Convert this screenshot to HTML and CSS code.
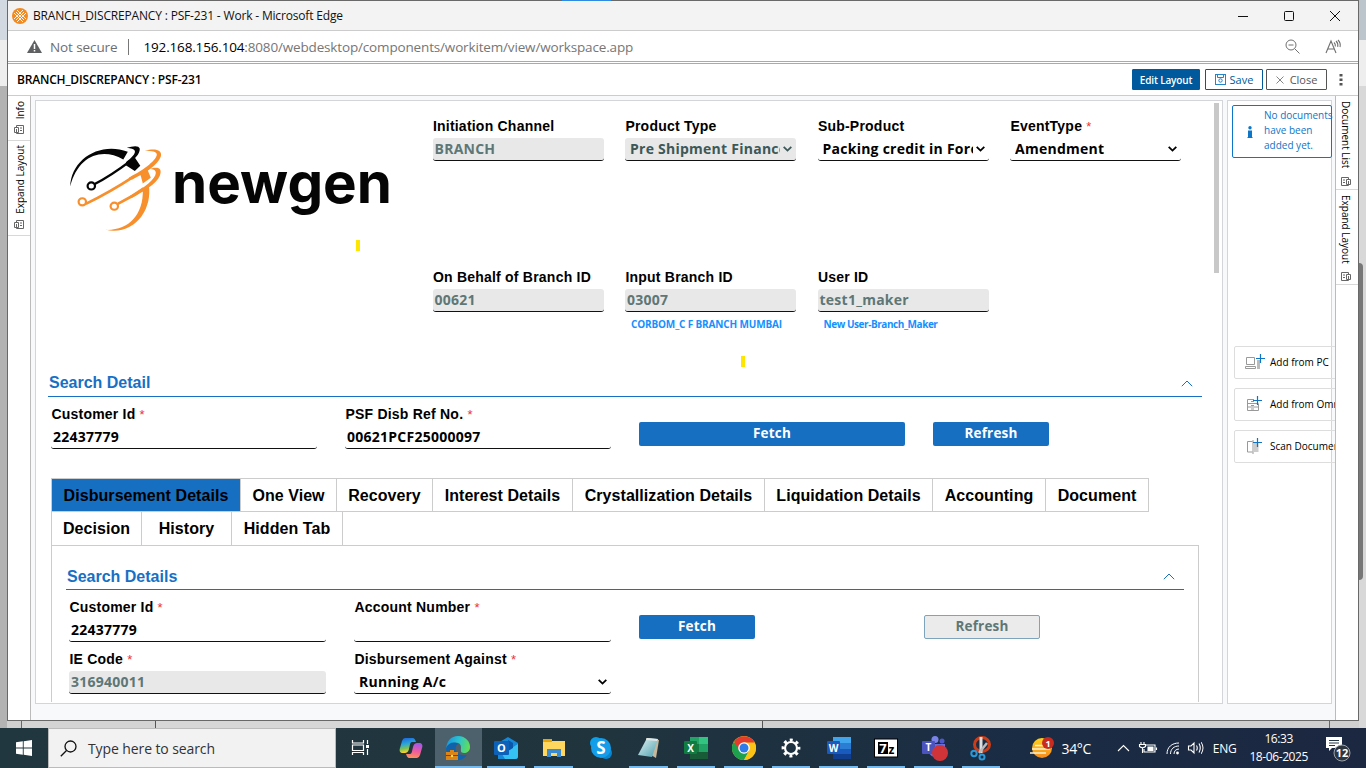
FILE: index.html
```html
<!DOCTYPE html>
<html lang="en">
<head>
<meta charset="utf-8">
<title>BRANCH_DISCREPANCY : PSF-231 - Work</title>
<link rel="stylesheet" href="styles.css">
</head>
<body>
<svg width="0" height="0" class="defs">
  <defs>
    <g id="rail-icon" fill="none" stroke="#666"><path d="M3.500 3V1.500H10.500V9.500H3.500V7M1.500 3.500H5.500V8.500H1.500zM7 4H9M7 6.500H9M3.500 5V7"/></g>
    <g id="plus"><path d="M4.500 0V9M0 4.500H9" stroke="#0f73c6" stroke-width="1.200"/></g>
    <linearGradient id="cop1" x1="0" y1="0" x2=".2" y2="1"><stop offset="0" stop-color="#1b62e0"/><stop offset=".45" stop-color="#29a7d8"/><stop offset=".75" stop-color="#7fc252"/><stop offset="1" stop-color="#ffd42a"/></linearGradient>
    <linearGradient id="cop2" x1=".5" y1="0" x2=".3" y2="1"><stop offset="0" stop-color="#a358e8"/><stop offset=".5" stop-color="#ef5aa0"/><stop offset="1" stop-color="#ff9355"/></linearGradient>
    <linearGradient id="edge1" x1="0" y1=".3" x2="1" y2=".5"><stop offset="0" stop-color="#1595e0"/><stop offset=".5" stop-color="#2bc3d2"/><stop offset="1" stop-color="#62de55"/></linearGradient>
    <linearGradient id="note" x1="0" y1="0" x2="1" y2="1"><stop offset="0" stop-color="#e3f3f4"/><stop offset="1" stop-color="#4ca0ad"/></linearGradient>
    <linearGradient id="sun" x1="0" y1="0" x2="0" y2="1"><stop offset="0" stop-color="#ffd21c"/><stop offset="1" stop-color="#f58a1f"/></linearGradient>
  </defs>
</svg>
<div class="desktop">
  <div class="stage">
    <div class="backdrop"><i class="b-left"></i><i class="b-right"></i><i class="b-thumb"></i><i class="b-foot"></i></div>
    <div class="window">
      <div class="titlebar">
        <svg class="favicon" width="16" height="16" viewBox="0 0 16 16"><circle cx="8" cy="8" r="8" fill="#f18a21"/><path d="M2 5L11 14M5 2L14 11M2 11L11 2M5 14L14 5M4 4L12 12M12 4L4 12" stroke="#fff" stroke-width=".9"/></svg>
        <span class="title-text">BRANCH_DISCREPANCY : PSF-231 - Work - Microsoft Edge</span>
        <svg class="winctl" width="110" height="12" viewBox="0 0 110 12" fill="none" stroke="#111"><path d="M2 6.500H12"/><rect x="48.500" y="1.500" width="9" height="9" rx="1"/><path d="M94 1L104 11M104 1L94 11"/></svg>
        <i class="accent"></i>
      </div>
      <div class="address">
        <svg width="15" height="13" viewBox="0 0 15 13"><path d="M7.500 0L15 13H0z" fill="#5e6062"/><path d="M7.500 4V9M7.500 10V11.500" stroke="#fff" stroke-width="1.500"/></svg>
        <span class="notsecure">Not secure</span><i class="bar"></i>
        <span class="url"><b>192.168.156.104</b>:8080/webdesktop/components/workitem/view/workspace.app</span>
        <svg class="lens" width="16" height="16" viewBox="0 0 16 16" fill="none" stroke="#707070"><circle cx="6" cy="6" r="5"/><path d="M3.500 6H8.500M9.800 9.800L14.500 14.500"/></svg>
        <svg class="aloud" width="17" height="16" viewBox="0 0 17 16" fill="none" stroke="#707070" stroke-width="1.100"><path d="M1 14L6 2L11 14M2.800 10H9.200M9 3.500C10.200 4.500 10.600 5.800 10.300 7.500M11 2C12.600 3.500 13.200 5.400 12.700 7.800M13 1C15 3 15.700 5.400 15 8"/></svg>
      </div>
      <div class="apphead">
        <span class="appname">BRANCH_DISCREPANCY : PSF-231</span>
        <button class="btn-head solid">Edit Layout</button>
        <button class="btn-head blue"><svg width="11" height="11" viewBox="0 0 11 11" fill="none" stroke="#2683c8"><rect x=".5" y=".5" width="10" height="10"/><path d="M2.500 .5V3.500H8.500V.5"/><circle cx="5.500" cy="6.500" r="1.700"/></svg>Save</button>
        <button class="btn-head gray"><svg width="8" height="8" viewBox="0 0 8 8" stroke="#777" fill="none" stroke-width=".9"><path d="M.5 .5L7.500 7.500M7.500 .5L.5 7.500"/></svg>Close</button>
        <svg class="dots" width="4" height="12" viewBox="0 0 4 12" fill="#555"><rect x=".5" y="0" width="3" height="2.500"/><rect x=".5" y="4.500" width="3" height="2.500"/><rect x=".5" y="9" width="3" height="2.500"/></svg>
      </div>
      <div class="body">
        <div class="rail left">
          <div class="rail-item info"><span>Info</span><svg width="12" height="11"><use href="#rail-icon"/></svg></div>
          <div class="rail-item expand"><span>Expand Layout</span><svg width="12" height="11"><use href="#rail-icon"/></svg></div>
        </div>
        <div class="panels">
          <main class="form">
            <div class="form-body">
              <div class="top">
                <div class="brand">
                  <svg width="324" height="96" viewBox="0 0 324 96">
                    <g transform="translate(.8 0) scale(1 .965)">
                    <g fill="#050505"><path d="M1.500 45C2 17 31-2 59 9L54.500 17C32 4 9 14 1.500 45z"/><path d="M58 5C64 3 70 2 71 6C71 12 66 16 59 23L57 20C63 15 67 11 66 8C65 6 62 6 58 5zM60 21L66 15L71.500 23.500L66 29L57 23z"/></g>
                    <path d="M25 43Q42 34 61 19" fill="none" stroke="#050505" stroke-width="2.500"/><circle cx="22.500" cy="44.500" r="3.700" fill="#fff" stroke="#050505" stroke-width="2.200"/>
                    <g fill="#f78f2d"><path d="M76 8C86 5 94 7 92 14C89 23 77 31 63 38L60 36C77 27 88 17 88 12C88 9 83 8 76 8zM71 30L78 26L82 36L74 42z"/><path d="M81 27C89 24 94 26 91 34C88 42 74 51 63 57L61 55C76 46 87 37 87 31C87 28 84 27 81 27zM74 48L80 43C84 70 65 96 37 90C59 91 75 75 74 48z"/></g>
                    <path d="M17 63Q41 51 66 34M49 63Q63 56 75 47" fill="none" stroke="#f78f2d" stroke-width="2.700"/>
                    <g fill="#fff" stroke="#f78f2d" stroke-width="2.200"><circle cx="13.500" cy="61" r="3.700"/><circle cx="45.500" cy="65.500" r="3.700"/></g>
                    </g>
                    <text x="104" y="60" class="wordmark" textLength="220" lengthAdjust="spacingAndGlyphs">newgen</text>
                  </svg>
                  <i class="mark"></i>
                </div>
                <div class="top-fields">
                  <div class="field"><label>Initiation Channel</label><div class="inp off">BRANCH</div></div>
                  <div class="field"><label>Product Type</label><div class="inp sel off dark"><span>Pre Shipment Finance</span><svg width="9" height="6" viewBox="0 0 9 6"><path d="M.7 .8L4.500 4.600L8.300 .8" fill="none" stroke="currentColor" stroke-width="1.800"/></svg></div></div>
                  <div class="field"><label>Sub-Product</label><div class="inp sel tight"><span>Packing credit in Foreign</span><svg width="9" height="6" viewBox="0 0 9 6"><path d="M.7 .8L4.500 4.600L8.300 .8" fill="none" stroke="currentColor" stroke-width="1.800"/></svg></div></div>
                  <div class="field"><label>EventType <em>*</em></label><div class="inp sel"><span>Amendment</span><svg width="9" height="6" viewBox="0 0 9 6"><path d="M.7 .8L4.500 4.600L8.300 .8" fill="none" stroke="currentColor" stroke-width="1.800"/></svg></div></div>
                  <div class="field"><label>On Behalf of Branch ID</label><div class="inp off">00621</div></div>
                  <div class="field"><label>Input Branch ID</label><div class="inp off">03007</div><div class="hint">CORBOM_C F BRANCH MUMBAI</div><i class="mark second"></i></div>
                  <div class="field"><label>User ID</label><div class="inp off">test1_maker</div><div class="hint narrow">New User-Branch_Maker</div></div>
                </div>
              </div>
              <div class="section-head"><h2>Search Detail</h2><svg width="12" height="7" viewBox="0 0 12 7"><path d="M.8 6.200L6 1L11.200 6.200" fill="none" stroke="#1770c4"/></svg></div>
              <div class="search-row">
                <div class="field"><label>Customer Id <em>*</em></label><div class="inp">22437779</div></div>
                <div class="field"><label>PSF Disb Ref No. <em>*</em></label><div class="inp">00621PCF25000097</div></div>
                <button class="act">Fetch</button>
                <button class="act short">Refresh</button>
              </div>
              <div class="tabs">
                <div class="tabrow"><div class="tab on w190">Disbursement Details</div><div class="tab w96">One View</div><div class="tab w96">Recovery</div><div class="tab w140">Interest Details</div><div class="tab w192">Crystallization Details</div><div class="tab w168">Liquidation Details</div><div class="tab w113">Accounting</div><div class="tab w102">Document</div></div>
                <div class="tabrow"><div class="tab w91">Decision</div><div class="tab w90">History</div><div class="tab w110">Hidden Tab</div></div>
              </div>
              <div class="tabpanel">
                <div class="section-head inner"><h2>Search Details</h2><svg width="12" height="7" viewBox="0 0 12 7"><path d="M.8 6.200L6 1L11.200 6.200" fill="none" stroke="#1770c4"/></svg></div>
                <div class="detail-grid">
                  <div class="field"><label>Customer Id <em>*</em></label><div class="inp">22437779</div></div>
                  <div class="field"><label>Account Number <em>*</em></label><div class="inp"></div></div>
                  <button class="act short">Fetch</button>
                  <button class="act short disabled">Refresh</button>
                  <div class="field"><label>IE Code <em>*</em></label><div class="inp off">316940011</div></div>
                  <div class="field"><label>Disbursement Against <em>*</em></label><div class="inp sel"><span>Running A/c</span><svg width="9" height="6" viewBox="0 0 9 6"><path d="M.7 .8L4.500 4.600L8.300 .8" fill="none" stroke="currentColor" stroke-width="1.800"/></svg></div></div>
                </div>
              </div>
            </div>
            <i class="scroll"></i>
          </main>
          <aside class="docs">
            <div class="notice"><svg width="6" height="12" viewBox="0 0 6 12" fill="#0e76c8"><circle cx="3" cy="1.700" r="1.700"/><path d="M1 4.500H5V11H5.500V12H.5V11H1z"/></svg><p>No documents<br>have been<br>added yet.</p></div>
            <div class="adders">
              <div class="add"><svg width="20" height="16" viewBox="0 0 20 16" fill="none" stroke="#999"><path d="M1.500 3.500H9.500V10.500H1.500zM.5 12.500H10.500V14.500H.5z"/><path d="M12 6H15V15H12z" fill="#bbb" stroke="none"/><use href="#plus" x="11"/></svg><span>Add from PC</span></div>
              <div class="add"><svg width="20" height="16" viewBox="0 0 20 16" fill="none" stroke="#999"><path d="M9 3.500H2.500V14.500H13.500V8M2.500 7.500H13.500M2.500 11H13.500M6 5.500H9M6 9.500H9M6 13H9"/><use href="#plus" x="8"/></svg><span>Add from OmniDocs</span></div>
              <div class="add"><svg width="20" height="16" viewBox="0 0 20 16" fill="none" stroke="#999"><path d="M7.500 3.500H2.500V14H7.500"/><path d="M9 5H13.500V14H9z" fill="#ccc" stroke="none"/><path d="M8 2V16"/><use href="#plus" x="8"/></svg><span>Scan Document</span></div>
            </div>
          </aside>
        </div>
        <div class="rail right">
          <div class="rail-item doclist"><span>Document List</span><svg width="12" height="11"><use href="#rail-icon"/></svg></div>
          <div class="rail-item expand"><span>Expand Layout</span><svg width="12" height="11"><use href="#rail-icon"/></svg></div>
        </div>
      </div>
    </div>
  </div>
  <div class="taskbar">
    <div class="start"><svg width="16" height="16" viewBox="0 0 16 16" fill="#fff"><path d="M0 2.300L6.800 1.300V7.500H0zM7.700 1.200L16 0V7.500H7.700zM0 8.400H6.800V14.700L0 13.700zM7.700 8.400H16V16L7.700 14.800z"/></svg></div>
    <div class="search"><svg width="17" height="17" viewBox="0 0 17 17" fill="none" stroke="#111" stroke-width="1.300"><circle cx="10.500" cy="6.500" r="5.500"/><path d="M6.500 10.500L.8 16.200"/></svg><span>Type here to search</span></div>
    <div class="apps">
      <div class="app first"><svg width="24" height="24" viewBox="0 0 24 24" fill="none" stroke="#fff" stroke-width="1.200"><path d="M4.500 4V7H15.500V4M4.500 19V16.500H15.500V19M4.500 9H15.500V14.500H4.500zM19.500 4V8M19.500 13V19"/><path d="M18 9H21V12H18z" fill="#fff" stroke="none"/></svg></div>
      <div class="app"><svg width="24" height="24" viewBox="0 0 24 24"><path d="M6 2H13C16 2 16 4 17 6H13C11 6 11 9 10 13C9 17 7 17 4 17C1 17 0 15 1 12L3 5Q4 2 6 2z" fill="url(#cop1)"/><path d="M18 22H11C8 22 8 20 7 18H11C13 18 13 15 14 11C15 7 17 7 20 7C23 7 24 9 23 12L21 19Q20 22 18 22z" fill="url(#cop2)"/></svg></div>
      <div class="app active run"><svg width="26" height="26" viewBox="0 0 26 26"><path d="M1 16C1 6 6 1 13 1C21 1 25 7 25 12C25 16 22 18 19 18C15 18 16 15 16 12C16 8 12 7 9 8C5 9 2 12 1 16z" fill="url(#edge1)"/><path d="M1 13C3 8 9 6 13 9C8 12 11 22 22 20C19 24 15 26 11 25C5 24 1 19 1 13z" fill="#1262ab"/><path d="M1 17H13V25H1zM5 15H9V17H5z" fill="#dc8415"/><path d="M1 20H13V21H1z" fill="#7b420e"/><circle cx="7" cy="21" r="1.200" fill="#ffdc5b"/></svg></div>
      <div class="app run"><svg width="26" height="24" viewBox="0 0 26 24"><path d="M5 7L15 1L25 7V21Q25 23 22 23H5z" fill="#1688d5"/><path d="M25 8L9 18L12 23H22Q25 23 25 20z" fill="#35c1f1"/><path d="M15 4L20 7V12L15 15z" fill="#0b57aa"/><rect x="1" y="5" width="15" height="14" rx="1" fill="#0d61b9"/><text x="8.500" y="16" class="glyph g11">O</text></svg></div>
      <div class="app run"><svg width="24" height="24" viewBox="0 0 24 24"><path d="M1 5H23V20H1z" fill="#ffd75e"/><path d="M1 3H10V6H1z" fill="#e5a50b"/><path d="M5 21V13H19V21H15V17H9V21z" fill="#3b8bd0"/></svg></div>
      <div class="app"><svg width="24" height="24" viewBox="0 0 24 24"><circle cx="7" cy="7" r="6" fill="#0ba0e8"/><circle cx="17" cy="17" r="6" fill="#0785d0"/><circle cx="12" cy="12" r="10" fill="#159dea"/><text x="12" y="18" class="glyph g16">S</text></svg></div>
      <div class="app run"><svg width="24" height="24" viewBox="0 0 24 24"><path d="M9 2L22 4L19 22L14 19z" fill="#c7b79b"/><path d="M10 2L21 3L15 21L1 19z" fill="url(#note)"/><path d="M10 2L21 3L20 5L9 4z" fill="#e4e6e6"/></svg></div>
      <div class="app run"><svg width="26" height="24" viewBox="0 0 26 24"><path d="M7 1H25V23H7z" fill="#177944"/><path d="M7 1H16V8H7z" fill="#23a366"/><path d="M16 1H25V8H16z" fill="#33c481"/><path d="M16 8H25V16H16z" fill="#21a366"/><path d="M7 16H25V23H7z" fill="#185c37"/><rect x="1" y="5" width="13" height="13" rx="1" fill="#107c41"/><text x="7.500" y="15.500" class="glyph g10">X</text></svg></div>
      <div class="app run"><svg width="24" height="24" viewBox="0 0 24 24"><circle cx="12" cy="12" r="12" fill="#fbc316"/><path d="M12 12L1.600 6A12 12 0 0 0 12 24L17 15z" fill="#1da14e"/><path d="M12 6.500H22.700A12 12 0 0 1 12 24L17 15z" fill="#fbc316"/><path d="M12 6.500H22.600A12 12 0 0 0 2 5.500L7 14z" fill="#e33b2e"/><circle cx="12" cy="12" r="5.800" fill="#fff"/><circle cx="12" cy="12" r="4.500" fill="#2d7bea"/></svg></div>
      <div class="app run"><svg width="20" height="20" viewBox="0 0 20 20" fill="none" stroke="#fff"><circle cx="10" cy="10" r="6" stroke-width="2.200"/><circle cx="10" cy="10" r="8" stroke-width="2.800" stroke-dasharray="3 3.283" stroke-dashoffset="1.500"/></svg></div>
      <div class="app run"><svg width="26" height="24" viewBox="0 0 26 24"><path d="M7 1H25V8H7z" fill="#41a5ee"/><path d="M7 7H25V13H7z" fill="#2b7cd3"/><path d="M7 13H25V18H7z" fill="#185abd"/><path d="M7 18H25V23H7z" fill="#103f91"/><rect x="1" y="5" width="13" height="13" rx="1" fill="#185abd"/><text x="7.500" y="15.500" class="glyph g10">W</text></svg></div>
      <div class="app run"><svg width="24" height="20" viewBox="0 0 24 20"><rect x=".5" y="1" width="23" height="18" fill="#fff" stroke="#000"/><rect x="4" y="4" width="10" height="12" fill="#000"/><text x="9" y="15" class="glyph g13">7</text><text x="17.500" y="16" class="glyph g12 black">z</text></svg></div>
      <div class="app run"><svg width="28" height="26" viewBox="0 0 28 26"><circle cx="15" cy="4.500" r="3.500" fill="#7b83eb"/><circle cx="22" cy="6" r="2.500" fill="#5059c9"/><path d="M8 9H25V16Q22 22 14 22Q8 20 8 13z" fill="#6870d8"/><rect x="2" y="6" width="13" height="13" rx="1" fill="#4b53bc"/><text x="8.500" y="16" class="glyph g10">T</text><circle cx="20" cy="18" r="8" fill="#d13438"/></svg></div>
      <div class="app run"><svg width="24" height="26" viewBox="0 0 24 26"><ellipse cx="13" cy="9.500" rx="7.500" ry="7" fill="none" stroke="#cc3d17" stroke-width="3"/><path d="M10.500 2H13.500V18H10.500z" fill="#ddd"/><path d="M18 8L10 18" stroke="#bbb" stroke-width="2.500"/><circle cx="5" cy="18.500" r="2.700" fill="none" stroke="#2a99d8" stroke-width="2"/><circle cx="13" cy="22" r="2.500" fill="none" stroke="#2a99d8" stroke-width="2"/></svg></div>
    </div>
    <div class="tray">
      <svg class="weather" width="26" height="24" viewBox="0 0 26 24"><circle cx="12" cy="12" r="10" fill="url(#sun)"/><path d="M5 9.500H18M2 13H20M0 17H16" stroke="#fff2d0" stroke-width="1.600"/><circle cx="18" cy="7" r="6" fill="#c92b21"/><text x="18" y="10.500" class="glyph g9">1</text></svg>
      <span class="temp">34°C</span>
      <svg class="t-icons" width="84" height="18" viewBox="0 0 84 18" fill="none" stroke="#fff" stroke-width="1.100"><path d="M1 12L6.500 6.500L12 12"/><path d="M28 6H38V13H27V10M39.500 8.500V11M24 3V5M27 3V5M22.500 5.500H28.500V7.500Q25.500 10 22.500 7.500zM25.500 9V14"/><path d="M31 8H36V11.500H31z" fill="#fff"/><path d="M50 15C50 8 55 4 62 4M53.500 15C53.500 10 57 7 62 7M57 15C57 12 59 10 62 10" stroke-width="1"/><circle cx="60.500" cy="14" r="1.400" fill="#fff" stroke="none"/><path d="M71.500 7H74L77 4V14L74 11H71.500zM79.500 6.500Q81 9 79.500 11.500M82 4.500Q84.500 9 82 13.500"/></svg>
      <svg class="wave" width="4" height="16" viewBox="0 0 4 16" fill="none" stroke="#fff"><path d="M0 2Q4 8 0 14"/></svg>
      <span class="lang">ENG</span>
      <div class="clock"><span>16:33</span><span>18-06-2025</span></div>
      <svg class="notif" width="26" height="26" viewBox="0 0 26 26"><path d="M1 1H17V12H7L4 15V12H1z" fill="#fff"/><path d="M4 4.500H14M4 7H14M4 9.500H10" stroke="#273647" stroke-width="1"/><circle cx="17" cy="17" r="8" fill="#30363d" stroke="#9aa4ae"/><text x="17" y="21" class="glyph g11">12</text></svg>
    </div>
  </div>
</div>
</body>
</html>
```
FILE: styles.css
```css
* { box-sizing: border-box; }
body { margin: 0; width: 1366px; height: 768px; overflow: hidden; font-family: "Open Sans", "Noto Sans", sans-serif; color: #000; }
svg { display: block; flex: none; }
button { font-family: inherit; padding: 0; margin: 0; }
i { display: block; }
.defs { position: absolute; }
.desktop { display: flex; flex-direction: column; height: 768px; }
.stage { position: relative; height: 728px; padding-left: 7px; background: #d0d0d0; }

/* the window that lies behind */
.b-left, .b-right, .b-thumb, .b-foot { position: absolute; }
.b-left { left: 0; top: 0; width: 7px; height: 728px; background: linear-gradient(#d3d9e0 0 40px, #eee 40px 86px, #b3b3b3 86px); }
.b-right { left: 1359px; top: 0; width: 7px; height: 728px; background: linear-gradient(#bcc4cc 0 40px, #eee 40px 86px, #d8d8d8 86px); }
.b-thumb { left: 1359px; top: 263px; width: 4px; height: 317px; background: #777; border-radius: 0 4px 4px 0; }
.b-foot { left: 21px; top: 720px; width: 1309px; height: 8px; background: linear-gradient(90deg, #d4d4d4 0 133px, #555 133px 134px, #d7d7d7 134px 740px, #555 740px 741px, #d0d0d0 741px); border: solid #667; border-width: 0 1px; }

.window { position: relative; width: 1352px; height: 721px; border: 1px solid #696969; background: #fff; display: flex; flex-direction: column; }
.titlebar { position: relative; height: 30px; background: #f3f3f3; border-bottom: 1px solid #ccc; display: flex; align-items: center; padding-left: 4px; }
.title-text { margin-left: 5px; font-size: 12px; letter-spacing: -.17px; white-space: nowrap; color: #111; }
.winctl { margin-left: auto; margin-right: 12px; }
.accent { position: absolute; left: 554px; top: -1px; width: 49px; height: 1px; background: #2d8ae0; }
.address { height: 31px; border-bottom: 1px solid #aaa; display: flex; align-items: center; padding: 1px 0 0 19px; }
.notsecure { margin-left: 8px; font-size: 13.500px; letter-spacing: -.1px; color: #6e6e6e; white-space: nowrap; }
.bar { width: 1px; height: 16px; background: #777; margin: 0 14px 0 11px; }
.url { font-size: 13.500px; letter-spacing: -.16px; color: #767676; white-space: nowrap; }
.url b { font-weight: 400; color: #000; }
.lens { margin-left: auto; }
.aloud { margin: 0 16px 0 24px; }
.apphead { height: 33px; margin-top: 1px; border-top: 1px solid #aaa; border-bottom: 1px solid #ccc; display: flex; align-items: center; padding-left: 9px; }
.appname { font-size: 12px; font-weight: 600; letter-spacing: -.18px; margin-right: auto; white-space: nowrap; }
.btn-head { height: 21px; display: flex; align-items: center; justify-content: center; border: 1px solid #005a9c; background: #fff; font-size: 11px; color: #005a9c; border-radius: 1px; }
.btn-head.solid { width: 68px; background: #00599c; color: #fff; font-weight: 600; font-size: 10px; letter-spacing: -.15px; }
.btn-head.blue { width: 58px; margin-left: 5px; gap: 4px; }
.btn-head.gray { width: 61px; margin-left: 3px; gap: 6px; border-color: #555; color: #555; }
.dots { margin: 0 15px 0 12px; }
.body { flex: 1; display: flex; min-height: 0; }

.rail { width: 23px; background: #fff; flex: none; }
.rail.left { border-right: 1px solid #bbb; }
.rail.right { border-left: 1px solid #bbb; position: relative; }
.rail-item { display: flex; flex-direction: column; align-items: center; justify-content: space-between; border-bottom: 1px solid #d8d8d8; font-size: 10px; padding: 5px 0 5px; }
.rail-item span { writing-mode: vertical-rl; line-height: 14px; white-space: nowrap; }
.left .rail-item span { transform: rotate(180deg); margin-left: 2px; }
.rail-item.info { height: 45px; }
.rail-item.expand { height: 95px; }
.left .expand { padding-top: 4px; }
.rail-item.doclist { height: 94px; padding-bottom: 2px; }
.right .rail-item span { margin-right: 3px; }
.right .expand { padding-bottom: 2px; }
.right .rail-item svg { transform: translateX(-1px) scaleX(-1); }

.panels { flex: 1; min-width: 0; display: flex; gap: 4px; background: #f8f9fb; padding: 4px 4px 16px 4px; }
.form { position: relative; width: 1188px; flex: none; border: 1px solid #d3d5d8; background: #fff; overflow: hidden; }
.form-body { height: 601px; overflow: hidden; padding-left: 12px; }
.scroll { position: absolute; right: 3px; top: 2px; width: 5px; height: 170px; background: #c8c8c8; }
.top { display: flex; height: 268px; }
.brand { width: 384.500px; padding: 42px 0 0 20px; }
.wordmark { font-family: Inter, sans-serif; font-weight: 700; font-size: 56px; fill: #050505; }
.mark { width: 4px; height: 11px; background: #ffe600; }
.brand .mark { margin: 1px 0 0 288px; }
.mark.second { margin: 25px 0 0 116px; }
.top-fields { display: grid; grid-template-columns: repeat(4, 171px); column-gap: 21.500px; grid-template-rows: 151px 117px; padding-top: 17px; }
.field { min-width: 0; }
label { display: block; font: bold 14px/17px "Liberation Sans", Arial, sans-serif; letter-spacing: .22px; padding-left: .4px; white-space: nowrap; }
label em { font-style: normal; font-weight: 400; font-size: 13px; color: #e33; }
.inp { height: 23px; margin-top: 3px; border-bottom: 1px solid #111; border-radius: 3px; padding-left: 2px; font-size: 14px; font-weight: 700; line-height: 22px; letter-spacing: .25px; white-space: nowrap; }
.inp.off { background: #e8e8e8; color: #5e7776; }
.inp.off.dark { color: #3c5857; }
.sel { display: flex; align-items: center; padding: 0 4px 0 5px; gap: 3px; }
.sel span { flex: 1; overflow: hidden; }
.hint { font-size: 10px; line-height: 14px; font-weight: 700; color: #1490ff; padding: 5px 0 0 6px; white-space: nowrap; letter-spacing: -.15px; }
.hint.narrow { letter-spacing: -.44px; }
.section-head { height: 28px; width: 1154px; border-bottom: 1px solid #1770c4; display: flex; align-items: center; justify-content: space-between; padding: 1px 9px 0 1px; }
h2 { margin: 0; font: bold 16px/18px "Liberation Sans", Arial, sans-serif; color: #1770c4; }
.search-row { display: grid; grid-template-columns: repeat(4, 266px); column-gap: 28px; padding: 9px 0 0 3px; height: 81px; }
.act { height: 24px; margin-top: 16px; background: #176fc1; color: #fff; border: 0; border-radius: 2px; font-weight: 700; font-size: 13.500px; letter-spacing: .2px; line-height: 22px; padding-bottom: 2px; }
.act.short { width: 116px; }
.act.disabled { background: #ebebeb; color: #5e7776; border: 1px solid #7da3bd; line-height: 20px; }
.tabs { margin-left: 3px; width: 1148px; }
.tabrow { display: flex; height: 34px; }
.tabrow + .tabrow { margin-top: -1px; height: 35px; }
.tab { border: 1px solid #ccc; border-left-width: 0; display: flex; align-items: center; justify-content: center; font: bold 16px/18px "Liberation Sans", Arial, sans-serif; letter-spacing: .06px; white-space: nowrap; padding-top: 1px; }
.tab:first-child { border-left-width: 1px; }
.tab.on { background: #176fc1; }
.w190 { width: 190px; } .w96 { width: 96px; } .w140 { width: 140px; } .w192 { width: 192px; } .w168 { width: 168px; } .w113 { width: 113px; } .w102 { width: 103px; } .w91 { width: 91px; } .w90 { width: 90px; } .w110 { width: 111px; }
.tabpanel { margin: -1px 0 0 3px; width: 1148px; height: 200px; border: 1px solid #ccc; padding: 16px 14px 0; }
.section-head.inner { width: 1118px; padding-top: 2px; }
.detail-grid { display: grid; grid-template-columns: repeat(4, 257px); column-gap: 28px; grid-template-rows: 52px 52px; padding: 9px 0 0 3px; }

.docs { position: relative; width: 105px; flex: none; border: 1px solid #d3d5d8; background: #fff; padding: 4px 0 0 4px; }
.notice { width: 100px; height: 53px; border: 1px solid #0e76c8; border-radius: 2px; color: #0e76c8; display: flex; align-items: center; padding-left: 14px; gap: 11px; font-size: 10px; line-height: 15px; }
.notice p { margin: -2px 0 0; white-space: nowrap; }
.adders { margin: 188px 0 0 2px; display: grid; gap: 9px; width: 101px; overflow: hidden; }
.add { height: 33px; width: 160px; border: 1px solid #ddd; border-radius: 2px; display: flex; align-items: center; gap: 5px; padding: 0 0 1px 10px; font-size: 10px; white-space: nowrap; }

.taskbar { height: 40px; display: flex; background: linear-gradient(90deg, #21373f 0, #20343e 45%, #1a2c44 75%, #1c2740); color: #fff; }
.start { width: 48px; display: grid; place-items: center; }
.search { width: 288px; background: #f2f2f2; border: 1px solid #bbb; display: flex; align-items: center; padding-left: 11px; gap: 11px; font-size: 14px; letter-spacing: -.1px; color: #333; }
.apps { display: flex; }
.app { width: 47.500px; height: 40px; position: relative; display: grid; place-items: center; }
.app.first { width: 51px; padding-right: 3px; }
.app.active { background: #4c616b; width: 47px; margin-right: 1px; }
.app.run::after { content: ""; position: absolute; left: 4px; right: 5px; bottom: 0; height: 2px; background: #76b9ed; }
.app.active::after { left: 0; right: 0; }
.glyph { font-family: "Open Sans", sans-serif; font-weight: 700; fill: #fff; text-anchor: middle; }
.g9 { font-size: 9px; } .g10 { font-size: 10px; } .g11 { font-size: 11px; } .g12 { font-size: 12px; } .g13 { font-size: 13px; } .g16 { font-size: 17px; }
.black { fill: #000; }
.tray { flex: 1; display: flex; align-items: center; justify-content: flex-end; white-space: nowrap; }
.temp { font-size: 14px; letter-spacing: -.4px; margin: 0 26px 0 6px; }
.lang { font-size: 12px; letter-spacing: -.3px; margin: 0 13px 0 8px; }
.clock { font-size: 12px; line-height: 18px; letter-spacing: -.4px; text-align: center; display: flex; flex-direction: column; }
.notif { margin: 2px 15px 0 17px; }
```
